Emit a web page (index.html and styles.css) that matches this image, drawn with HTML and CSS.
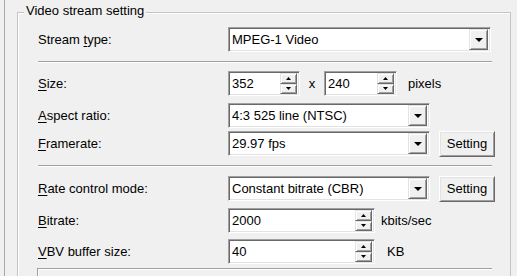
FILE: index.html
```html
<!DOCTYPE html>
<html>
<head>
<meta charset="utf-8">
<link rel="stylesheet" href="styles.css">
</head>
<body>
<div class="frame">
  <div class="group">
    <div class="group-title">Video stream setting</div>

    <div class="row r-stream">
      <div class="label">Stream <u>t</u>ype:</div>
      <div class="combo w-wide">
        <span class="val">MPEG-1 Video</span>
        <span class="drop"><svg width="8" height="4" viewBox="0 0 8 4"><polygon points="0,0 8,0 4,4" fill="#000"/></svg></span>
      </div>
    </div>

    <div class="sep s1"></div>

    <div class="row r-size">
      <div class="label"><u>S</u>ize:</div>
      <div class="spin w-small">
        <span class="val">352</span>
        <span class="spinbtns">
          <span class="sb"><svg width="5" height="3" viewBox="0 0 5 3"><polygon points="2.5,0 5,3 0,3" fill="#000"/></svg></span>
          <span class="sb"><svg width="5" height="3" viewBox="0 0 5 3"><polygon points="0,0 5,0 2.5,3" fill="#000"/></svg></span>
        </span>
      </div>
      <span class="times">x</span>
      <div class="spin w-small2">
        <span class="val">240</span>
        <span class="spinbtns">
          <span class="sb"><svg width="5" height="3" viewBox="0 0 5 3"><polygon points="2.5,0 5,3 0,3" fill="#000"/></svg></span>
          <span class="sb"><svg width="5" height="3" viewBox="0 0 5 3"><polygon points="0,0 5,0 2.5,3" fill="#000"/></svg></span>
        </span>
      </div>
      <span class="unit u-pixels">pixels</span>
    </div>

    <div class="row r-aspect">
      <div class="label"><u>A</u>spect ratio:</div>
      <div class="combo w-mid">
        <span class="val">4:3 525 line (NTSC)</span>
        <span class="drop"><svg width="8" height="4" viewBox="0 0 8 4"><polygon points="0,0 8,0 4,4" fill="#000"/></svg></span>
      </div>
    </div>

    <div class="row r-frame tall">
      <div class="label"><u>F</u>ramerate:</div>
      <div class="combo w-mid">
        <span class="val">29.97 fps</span>
        <span class="drop"><svg width="8" height="4" viewBox="0 0 8 4"><polygon points="0,0 8,0 4,4" fill="#000"/></svg></span>
      </div>
      <div class="button">Setting</div>
    </div>

    <div class="sep s2"></div>

    <div class="row r-rate tall">
      <div class="label"><u>R</u>ate control mode:</div>
      <div class="combo w-mid">
        <span class="val">Constant bitrate (CBR)</span>
        <span class="drop"><svg width="8" height="4" viewBox="0 0 8 4"><polygon points="0,0 8,0 4,4" fill="#000"/></svg></span>
      </div>
      <div class="button">Setting</div>
    </div>

    <div class="row r-bitrate">
      <div class="label"><u>B</u>itrate:</div>
      <div class="spin w-long">
        <span class="val">2000</span>
        <span class="spinbtns">
          <span class="sb"><svg width="5" height="3" viewBox="0 0 5 3"><polygon points="2.5,0 5,3 0,3" fill="#000"/></svg></span>
          <span class="sb"><svg width="5" height="3" viewBox="0 0 5 3"><polygon points="0,0 5,0 2.5,3" fill="#000"/></svg></span>
        </span>
      </div>
      <span class="unit u-kbits">kbits/sec</span>
    </div>

    <div class="row r-vbv">
      <div class="label"><u>V</u>BV buffer size:</div>
      <div class="spin w-long">
        <span class="val">40</span>
        <span class="spinbtns">
          <span class="sb"><svg width="5" height="3" viewBox="0 0 5 3"><polygon points="2.5,0 5,3 0,3" fill="#000"/></svg></span>
          <span class="sb"><svg width="5" height="3" viewBox="0 0 5 3"><polygon points="0,0 5,0 2.5,3" fill="#000"/></svg></span>
        </span>
      </div>
      <span class="unit u-kb">KB</span>
    </div>

    <div class="bottombox"></div>
  </div>
</div>
</body>
</html>
```

FILE: styles.css
```css
html, body {
  margin: 0;
  padding: 0;
}
body {
  width: 517px;
  height: 276px;
  overflow: hidden;
  background: #f0f0f0;
  font: 13px "Liberation Sans", Arial, sans-serif;
  color: #000;
}
u {
  text-decoration: underline;
  text-underline-offset: 2px;
}
.frame {
  margin-left: 4px;
  border-left: 1px solid #a9a9a9;
  height: 276px;
  box-sizing: border-box;
  padding: 12px 0 0 12px;
  overflow: hidden;
}
.group {
  position: relative;
  width: 494px;
  height: 300px;
  box-sizing: border-box;
  border: 1px solid #c4c4c4;
  box-shadow: inset 1px 1px 0 #fff;
  padding: 14px 0 0 20px;
}
.group-title {
  position: absolute;
  top: -10px;
  left: 6px;
  padding: 0 2px;
  line-height: 16px;
  background: #f0f0f0;
}
.row {
  display: flex;
  align-items: center;
  height: 25px;
}
.row.tall {
  height: 27px;
}
.label {
  width: 190px;
  flex: none;
}
.sep {
  width: 454px;
  border-top: 1px solid #a0a0a0;
  border-bottom: 1px solid #fff;
}
.s1 { margin: 9px 0 8px; }
.r-aspect { margin-top: 7px; }
.r-frame { margin-top: 2px; }
.s2 { margin: 8px 0 8px; }
.r-bitrate { margin-top: 6px; }
.r-vbv { margin-top: 6px; }

.combo, .spin {
  position: relative;
  display: flex;
  align-items: center;
  height: 25px;
  box-sizing: border-box;
  background: #fff;
  border: 1px solid;
  border-color: #a0a0a0 #fff #fff #a0a0a0;
  box-shadow: inset 1px 1px 0 #696969, inset -1px -1px 0 #e3e3e3;
  padding: 2px 2px 2px 3px;
  flex: none;
}
.val {
  flex: 1;
  line-height: 15px;
  white-space: nowrap;
}
.w-wide { width: 263px; }
.w-mid { width: 202px; }
.w-small { width: 72px; }
.w-small2 { width: 73px; }
.w-long { width: 147px; }

.drop {
  width: 19px;
  height: 21px;
  flex: none;
  box-sizing: border-box;
  display: flex;
  align-items: center;
  justify-content: center;
  background: #f0f0f0;
  border: 1px solid;
  border-color: #e3e3e3 #696969 #696969 #e3e3e3;
  box-shadow: inset 1px 1px 0 #fff, inset -1px -1px 0 #a0a0a0;
}
.drop svg { display: block; margin-top: 1px; }

.spinbtns {
  width: 17px;
  height: 21px;
  flex: none;
  display: flex;
  flex-direction: column;
}
.sb {
  flex: 1;
  box-sizing: border-box;
  display: flex;
  align-items: center;
  justify-content: center;
  background: #f0f0f0;
  border: 1px solid;
  border-color: #e3e3e3 #696969 #696969 #e3e3e3;
  box-shadow: inset 1px 1px 0 #fff, inset -1px -1px 0 #a0a0a0;
}
.sb svg { display: block; }

.times {
  width: 24px;
  text-align: center;
  flex: none;
}
.unit { flex: none; }
.u-pixels { margin-left: 11px; }
.u-kbits { margin-left: 6px; }
.u-kb { margin-left: 12px; }

.button {
  margin-left: 9px;
  width: 56px;
  height: 26px;
  box-sizing: border-box;
  display: flex;
  align-items: center;
  justify-content: center;
  background: #f0f0f0;
  border: 1px solid;
  border-color: #fff #696969 #696969 #fff;
  box-shadow: inset 1px 1px 0 #e3e3e3, inset -1px -1px 0 #a0a0a0;
  flex: none;
}

.bottombox {
  margin-top: 4px;
  margin-left: -1px;
  width: 455px;
  height: 20px;
  box-sizing: border-box;
  border-top: 1px solid #a0a0a0;
  border-left: 1px solid #a0a0a0;
  box-shadow: inset 1px 1px 0 #fff;
}
```
